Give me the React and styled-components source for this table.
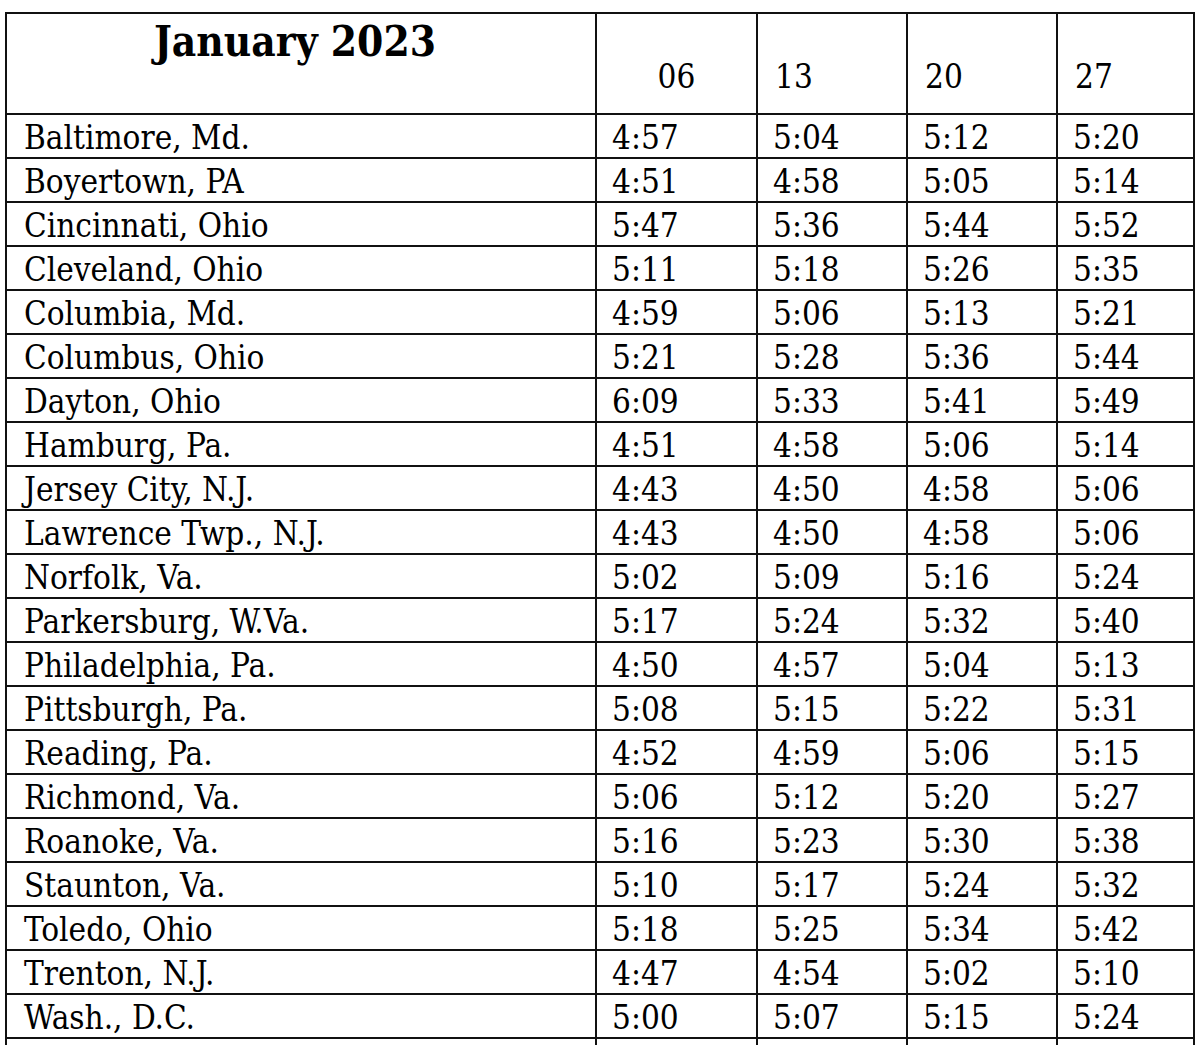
import React from "react";
import styled, { createGlobalStyle } from "styled-components";

const GlobalStyle = createGlobalStyle`
  html, body {
    margin: 0;
    padding: 0;
    background: #fff;
  }
  body {
    font-family: "DejaVu Serif Condensed", "DejaVu Serif", serif;
    font-stretch: condensed;
    color: #000;
  }
`;

const Page = styled.div`
  padding: 12px 0 0 5px;
`;

const Table = styled.table`
  border-collapse: collapse;
  table-layout: fixed;
  width: 1188px;
  font-size: 33px;
`;

const Col = styled.col`
  width: ${(p) => p.$w}px;
`;

const HeadCell = styled.th`
  border: 2px solid #111;
  height: 82px;
  padding: 0 0 17px ${(p) => (p.$center ? "0" : "17px")};
  font-weight: 400;
  font-size: 33px;
  text-align: ${(p) => (p.$center ? "center" : "left")};
  vertical-align: bottom;
`;

const TitleCell = styled.th`
  border: 2px solid #111;
  padding: 3px 12px 0 0;
  font-size: 42px;
  font-weight: 700;
  text-align: center;
  vertical-align: top;
`;

const Cell = styled.td`
  border: 2px solid #111;
  height: 38px;
  padding: 4px 0 0 ${(p) => (p.$city ? "17px" : "15px")};
  line-height: 38px;
  white-space: nowrap;
  vertical-align: middle;
`;

const widths = [590, 161, 150, 150, 137];

const times = [
  ["Baltimore, Md.", "4:57", "5:04", "5:12", "5:20"],
  ["Boyertown, PA", "4:51", "4:58", "5:05", "5:14"],
  ["Cincinnati, Ohio", "5:47", "5:36", "5:44", "5:52"],
  ["Cleveland, Ohio", "5:11", "5:18", "5:26", "5:35"],
  ["Columbia, Md.", "4:59", "5:06", "5:13", "5:21"],
  ["Columbus, Ohio", "5:21", "5:28", "5:36", "5:44"],
  ["Dayton, Ohio", "6:09", "5:33", "5:41", "5:49"],
  ["Hamburg, Pa.", "4:51", "4:58", "5:06", "5:14"],
  ["Jersey City, N.J.", "4:43", "4:50", "4:58", "5:06"],
  ["Lawrence Twp., N.J.", "4:43", "4:50", "4:58", "5:06"],
  ["Norfolk, Va.", "5:02", "5:09", "5:16", "5:24"],
  ["Parkersburg, W.Va.", "5:17", "5:24", "5:32", "5:40"],
  ["Philadelphia, Pa.", "4:50", "4:57", "5:04", "5:13"],
  ["Pittsburgh, Pa.", "5:08", "5:15", "5:22", "5:31"],
  ["Reading, Pa.", "4:52", "4:59", "5:06", "5:15"],
  ["Richmond, Va.", "5:06", "5:12", "5:20", "5:27"],
  ["Roanoke, Va.", "5:16", "5:23", "5:30", "5:38"],
  ["Staunton, Va.", "5:10", "5:17", "5:24", "5:32"],
  ["Toledo, Ohio", "5:18", "5:25", "5:34", "5:42"],
  ["Trenton, N.J.", "4:47", "4:54", "5:02", "5:10"],
  ["Wash., D.C.", "5:00", "5:07", "5:15", "5:24"],
  ["", "", "", "", ""],
];

export default function App() {
  return (
    <>
      <GlobalStyle />
      <Page>
        <Table>
          <colgroup>
            {widths.map((w, i) => (
              <Col key={i} $w={w} />
            ))}
          </colgroup>
          <thead>
            <tr>
              <TitleCell>January 2023</TitleCell>
              <HeadCell $center>06</HeadCell>
              <HeadCell>13</HeadCell>
              <HeadCell>20</HeadCell>
              <HeadCell>27</HeadCell>
            </tr>
          </thead>
          <tbody>
            {times.map((row, i) => (
              <tr key={i}>
                {row.map((v, j) => (
                  <Cell key={j} $city={j === 0}>
                    {v}
                  </Cell>
                ))}
              </tr>
            ))}
          </tbody>
        </Table>
      </Page>
    </>
  );
}
